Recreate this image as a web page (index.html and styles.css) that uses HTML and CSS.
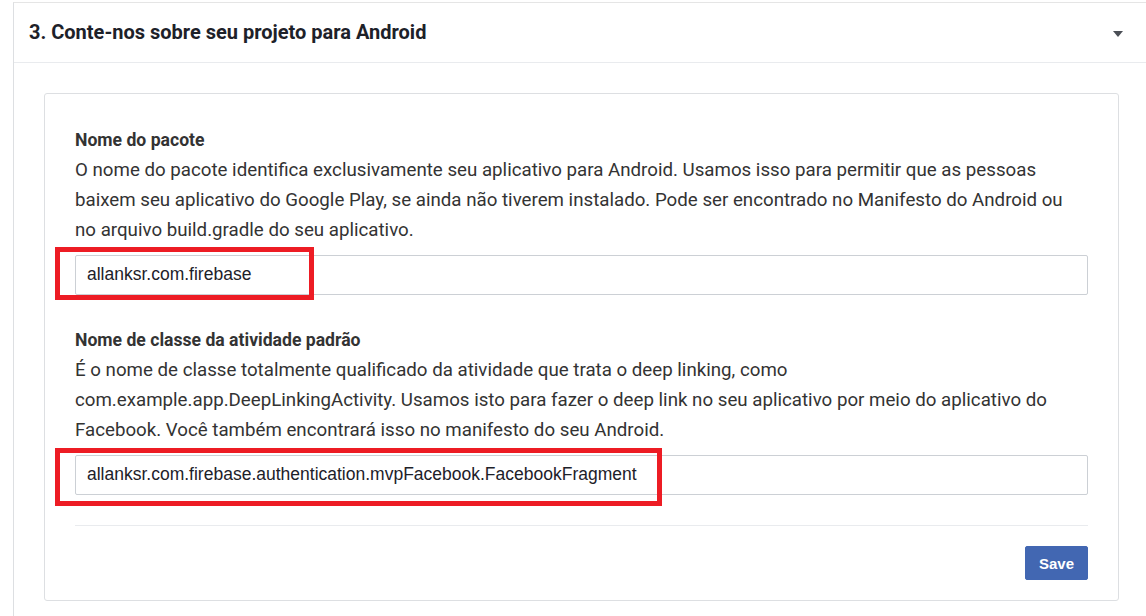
FILE: index.html
```html
<!DOCTYPE html>
<html lang="pt-BR">
<head>
<meta charset="utf-8">
<title>Conte-nos sobre seu projeto para Android</title>
<link rel="stylesheet" href="styles.css">
</head>
<body>
<section class="panel">
  <header class="panel-head">
    <h2 class="panel-title">3. Conte-nos sobre seu projeto para Android</h2>
    <span class="caret" aria-hidden="true"></span>
  </header>
  <div class="panel-body">
    <div class="card">
      <div class="field">
        <div class="label">Nome do pacote</div>
        <p class="desc">O nome do pacote identifica exclusivamente seu aplicativo para Android. Usamos isso para permitir que as pessoas baixem seu aplicativo do Google Play, se ainda não tiverem instalado. Pode ser encontrado no Manifesto do Android ou no arquivo build.gradle do seu aplicativo.</p>
        <div class="input-wrap">
          <div class="input">allanksr.com.firebase</div>
          <span class="mark mark-1"></span>
        </div>
      </div>
      <div class="field">
        <div class="label">Nome de classe da atividade padrão</div>
        <p class="desc">É o nome de classe totalmente qualificado da atividade que trata o deep linking, como com.example.app.DeepLinkingActivity. Usamos isto para fazer o deep link no seu aplicativo por meio do aplicativo do Facebook. Você também encontrará isso no manifesto do seu Android.</p>
        <div class="input-wrap">
          <div class="input">allanksr.com.firebase.authentication.mvpFacebook.FacebookFragment</div>
          <span class="mark mark-2"></span>
        </div>
      </div>
      <div class="footer">
        <button class="btn-save" type="button">Save</button>
      </div>
    </div>
  </div>
</section>
</body>
</html>
```

FILE: styles.css
```css
html, body {
  margin: 0;
  padding: 0;
  background: #fff;
  overflow: hidden;
}
body {
  width: 1146px;
  height: 616px;
  font-family: Roboto, "Liberation Sans", Arial, sans-serif;
  color: #1d2129;
}
.panel {
  box-sizing: border-box;
  margin: 2px 0 0 13px;
  width: 1133px;
  height: 614px;
  border-top: 1px solid #e5e5e5;
  border-left: 1px solid #dddfe2;
}
.panel-head {
  display: flex;
  align-items: center;
  justify-content: space-between;
  height: 59px;
  padding: 0 23px 2px 15px;
  box-sizing: border-box;
  height: 60px;
  border-bottom: 1px solid #e9ebee;
}
.panel-title {
  margin: 0;
  font-size: 20px;
  font-weight: 700;
  color: #1d2129;
}
.caret {
  width: 0;
  height: 0;
  border-left: 5px solid transparent;
  border-right: 5px solid transparent;
  border-top: 6px solid #4b4f56;
  margin-top: 5px;
}
.panel-body {
  padding: 30px 27px 0 30px;
}
.card {
  border: 1px solid #dddfe2;
  border-radius: 3px;
  padding: 31px 30px 20px 30px;
}
.field + .field {
  margin-top: 30px;
}
.label {
  font-size: 17.6px;
  font-weight: 700;
  line-height: 30px;
  color: #333;
}
.desc {
  margin: 0;
  font-size: 18.72px;
  line-height: 30px;
  color: #333;
}
.input-wrap {
  position: relative;
  margin-top: 10px;
}
.input {
  box-sizing: border-box;
  height: 40px;
  border: 1px solid #ccd0d5;
  border-radius: 2px;
  padding: 0 11px;
  font-family: "Liberation Sans", Arial, sans-serif;
  font-size: 17.5px;
  line-height: 36px;
  color: #1d2129;
}
.mark {
  position: absolute;
  border: 5px solid #ed1c24;
  box-sizing: border-box;
}
.mark-1 {
  left: -20px;
  top: -8px;
  width: 259px;
  height: 53px;
}
.mark-2 {
  left: -20px;
  top: -7px;
  width: 607px;
  height: 58px;
}
.footer {
  margin-top: 30px;
  border-top: 1px solid #e9ebee;
  padding-top: 20px;
  display: flex;
  justify-content: flex-end;
}
.btn-save {
  width: 63px;
  height: 34px;
  border: 1px solid #4267b2;
  border-radius: 2px;
  background: #4267b2;
  color: #fff;
  font-family: "Liberation Sans", Arial, sans-serif;
  font-weight: 700;
  font-size: 15px;
  padding: 0;
}
```
